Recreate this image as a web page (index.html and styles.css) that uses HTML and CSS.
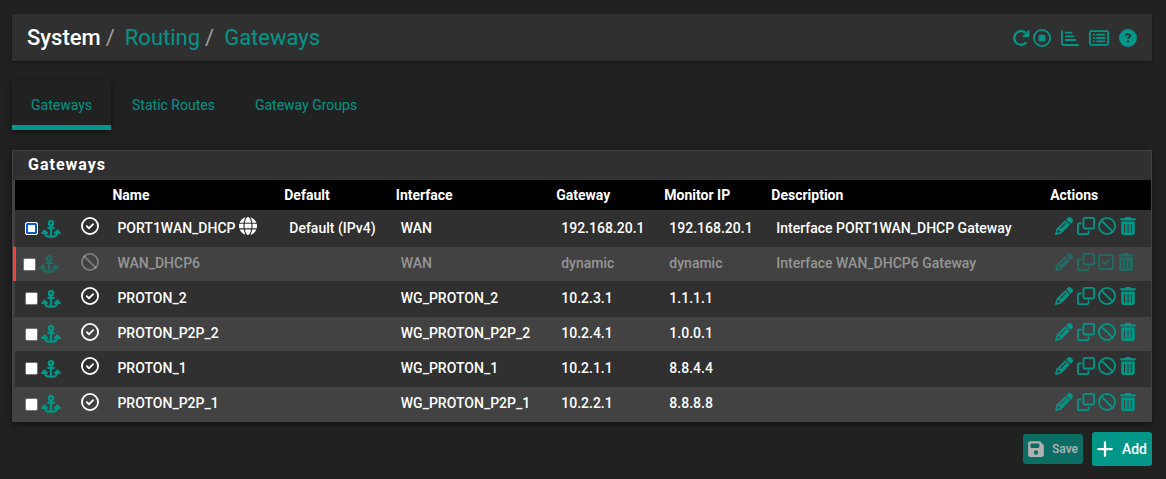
FILE: index.html
```
<!DOCTYPE html>
<html lang="en">
<head>
    <meta charset="UTF-8">
    <meta name="viewport" content="width=device-width, initial-scale=1.0">
    <title>System: Routing: Gateways</title>
    <link rel="stylesheet" href="styles.css">
</head>
<body>
<!-- icon set -->
<svg class="sprite" aria-hidden="true">
    <symbol id="i-reload" viewBox="0 0 512 512"><path d="M386.3 160H336c-17.7 0-32 14.3-32 32s14.3 32 32 32H464c17.7 0 32-14.3 32-32V64c0-17.7-14.3-32-32-32s-32 14.3-32 32v51.2L414.4 97.6c-87.5-87.5-229.3-87.5-316.8 0s-87.5 229.3 0 316.8s229.3 87.5 316.8 0c12.5-12.5 12.5-32.8 0-45.3s-32.8-12.5-45.3 0c-62.5 62.5-163.8 62.5-226.3 0s-62.5-163.8 0-226.3s163.8-62.5 226.3 0L386.3 160z"/></symbol>
    <symbol id="i-stop" viewBox="0 0 512 512"><circle class="line" cx="256" cy="256" r="230"/><rect x="160" y="160" width="192" height="192" rx="32"/></symbol>
    <symbol id="i-chart" viewBox="0 0 512 512"><path class="line" d="M26 56v344c0 31 25 56 56 56h404M136 104h160M136 208h224M136 312h272"/></symbol>
    <symbol id="i-list" viewBox="0 0 576 512"><rect class="line" x="26" y="56" width="524" height="400" rx="40"/><path class="line" d="M232 160h216M232 256h216M232 352h216"/><circle cx="144" cy="160" r="32"/><circle cx="144" cy="256" r="32"/><circle cx="144" cy="352" r="32"/></symbol>
    <symbol id="i-help" viewBox="0 0 512 512"><path d="M256 512A256 256 0 1 0 256 0a256 256 0 1 0 0 512zM169.8 165.3c7.9-22.3 29.1-37.3 52.8-37.3h58.3c34.9 0 63.1 28.3 63.1 63.1c0 22.6-12.1 43.5-31.7 54.8L280 264.4c-.2 13-10.9 23.6-24 23.6c-13.3 0-24-10.7-24-24V250.5c0-8.6 4.6-16.5 12.1-20.8l44.3-25.4c4.7-2.7 7.6-7.7 7.6-13.1c0-8.4-6.8-15.1-15.1-15.1H222.6c-3.4 0-6.4 2.1-7.5 5.3l-.4 1.2c-4.4 12.5-18.2 19-30.6 14.6s-19-18.2-14.6-30.6l.4-1.2zM224 352a32 32 0 1 1 64 0 32 32 0 1 1-64 0z"/></symbol>
    <symbol id="i-anchor" viewBox="0 0 576 512"><circle class="line bold" cx="288" cy="92" r="62"/><path class="line bold" d="M288 160v318M208 224h160M104 340v12c0 70 58 126 128 126h112c70 0 128-56 128-126v-12"/><path d="M104 268c8 0 14 3 19 8l76 80c16 18 4 44-19 44H28c-23 0-35-26-19-44l76-80c5-5 11-8 19-8zM472 268c8 0 14 3 19 8l76 80c16 18 4 44-19 44H396c-23 0-35-26-19-44l76-80c5-5 11-8 19-8z"/></symbol>
    <symbol id="i-ok" viewBox="0 0 512 512"><circle class="line" cx="256" cy="256" r="230"/><path class="line" d="M166 262l60 58 120-116"/></symbol>
    <symbol id="i-ban" viewBox="0 0 512 512"><circle class="line" cx="256" cy="256" r="230"/><path class="line" d="M94 94l324 324"/></symbol>
    <symbol id="i-globe" viewBox="0 0 512 512"><path d="M352 256c0 22.2-1.2 43.6-3.3 64H163.3c-2.2-20.4-3.3-41.8-3.3-64s1.2-43.6 3.3-64H348.7c2.2 20.4 3.3 41.8 3.3 64zm28.8-64H503.9c5.3 20.5 8.1 41.9 8.1 64s-2.8 43.5-8.1 64H380.8c2.1-20.6 3.2-42 3.2-64s-1.1-43.4-3.2-64zm112.6-32H376.7c-10-63.9-29.8-117.4-55.3-151.6c78.3 20.7 142 77.5 171.9 151.6zm-149.1 0H167.7c6.1-36.4 15.5-68.6 27-94.7c10.5-23.6 22.2-40.7 33.5-51.5C239.4 3.2 248.7 0 256 0s16.6 3.2 27.8 13.8c11.3 10.8 23 27.9 33.5 51.5c11.6 26 20.9 58.2 27 94.7zm-209 0H18.6C48.6 85.9 112.2 29.1 190.6 8.4C165.1 42.6 145.3 96.1 135.3 160zM8.1 192H131.2c-2.1 20.6-3.2 42-3.2 64s1.1 43.4 3.2 64H8.1C2.8 299.5 0 278.1 0 256s2.8-43.5 8.1-64zM194.7 446.6c-11.6-26-20.9-58.2-27-94.6H344.3c-6.1 36.4-15.5 68.6-27 94.6c-10.5 23.6-22.2 40.7-33.5 51.5C272.6 508.8 263.3 512 256 512s-16.6-3.2-27.8-13.8c-11.3-10.8-23-27.9-33.5-51.5zM135.3 352c10 63.9 29.8 117.4 55.3 151.6C112.2 482.9 48.6 426.1 18.6 352H135.3zm358.1 0c-30 74.1-93.6 130.9-171.9 151.6c25.5-34.2 45.2-87.7 55.3-151.6H493.4z"/></symbol>
    <symbol id="i-edit" viewBox="0 0 512 512"><path d="M410.3 231l11.3-11.3-33.9-33.9-62.1-62.1L291.7 89.8l-11.3 11.3-22.6 22.6L58.6 322.9c-10.4 10.4-18 23.3-22.2 37.4L1 480.7c-2.5 8.4-.2 17.5 6.1 23.7s15.3 8.5 23.7 6.1l120.3-35.4c14.1-4.2 27-11.8 37.4-22.2L387.7 253.7 410.3 231zM160 399.4l-9.1 22.7c-4 3.1-8.5 5.4-13.3 6.9L59.4 452l23-78.1c1.4-4.9 3.8-9.4 6.9-13.3l22.7-9.1v32c0 8.8 7.2 16 16 16h32zM362.7 18.7L348.3 33.2 325.7 55.8 314.3 67.1l33.9 33.9 62.1 62.1 33.9 33.9 11.3-11.3 22.6-22.6 14.5-14.5c25-25 25-65.5 0-90.5L453.3 18.7c-25-25-65.5-25-90.5 0zm-47.4 168l-144 144c-6.2 6.2-16.4 6.2-22.6 0s-6.2-16.4 0-22.6l144-144c6.2-6.2 16.4-6.2 22.6 0s6.2 16.4 0 22.6z"/></symbol>
    <symbol id="i-copy" viewBox="0 0 512 512"><rect class="line" x="184" y="26" width="302" height="302" rx="40"/><path class="line" d="M112 184H66c-22 0-40 18-40 40v222c0 22 18 40 40 40h222c22 0 40-18 40-40v-46"/></symbol>
    <symbol id="i-trash" viewBox="0 0 448 512"><path d="M135.2 17.7C140.6 6.8 151.7 0 163.8 0H284.2c12.1 0 23.2 6.8 28.6 17.7L320 32h96c17.7 0 32 14.3 32 32s-14.3 32-32 32H32C14.3 96 0 81.7 0 64S14.3 32 32 32h96l7.2-14.3zM32 128H416V448c0 35.3-28.7 64-64 64H96c-35.3 0-64-28.7-64-64V128zm96 64c-8.8 0-16 7.2-16 16V432c0 8.8 7.2 16 16 16s16-7.2 16-16V208c0-8.8-7.2-16-16-16zm96 0c-8.8 0-16 7.2-16 16V432c0 8.8 7.2 16 16 16s16-7.2 16-16V208c0-8.8-7.2-16-16-16zm96 0c-8.8 0-16 7.2-16 16V432c0 8.8 7.2 16 16 16s16-7.2 16-16V208c0-8.8-7.2-16-16-16z"/></symbol>
    <symbol id="i-enable" viewBox="0 0 448 512"><rect class="line" x="26" y="58" width="396" height="396" rx="40"/><path class="line" d="M136 256l60 60 116-116"/></symbol>
    <symbol id="i-save" viewBox="0 0 448 512"><path d="M64 32C28.7 32 0 60.7 0 96V416c0 35.3 28.7 64 64 64H384c35.3 0 64-28.7 64-64V173.3c0-17-6.7-33.3-18.7-45.3L352 50.7C340 38.7 323.7 32 306.7 32H64zm0 96c0-17.7 14.3-32 32-32H288c17.7 0 32 14.3 32 32v64c0 17.7-14.3 32-32 32H96c-17.7 0-32-14.3-32-32V128zM224 288a64 64 0 1 1 0 128 64 64 0 1 1 0-128z"/></symbol>
    <symbol id="i-plus" viewBox="0 0 448 512"><path class="line bold" d="M224 64v384M32 256h384"/></symbol>
</svg>

<header class="page-header">
    <ol class="breadcrumb">
        <li>System</li>
        <li><a href="#">Routing</a></li>
        <li><a href="#">Gateways</a></li>
    </ol>
    <nav class="shortcuts" aria-label="Shortcuts">
        <span class="service">
            <a href="#" aria-label="Restart service"><svg class="icon"><use href="#i-reload"/></svg></a>
            <a href="#" aria-label="Stop service"><svg class="icon"><use href="#i-stop"/></svg></a>
        </span>
        <a href="#" aria-label="Status"><svg class="icon"><use href="#i-chart"/></svg></a>
        <a href="#" aria-label="Logs"><svg class="icon wide"><use href="#i-list"/></svg></a>
        <a href="#" aria-label="Help"><svg class="icon"><use href="#i-help"/></svg></a>
    </nav>
</header>

<nav class="tabs" aria-label="Routing">
    <a href="#" class="active">Gateways</a>
    <a href="#">Static Routes</a>
    <a href="#">Gateway Groups</a>
</nav>

<form>
    <section class="panel">
        <h2>Gateways</h2>
        <table>
            <colgroup>
                <col class="c-select"><col class="c-status"><col class="c-name"><col class="c-default"><col class="c-interface"><col class="c-gateway"><col class="c-monitor"><col class="c-descr"><col class="c-actions">
            </colgroup>
            <thead>
            <tr>
                <th></th>
                <th></th>
                <th>Name</th>
                <th>Default</th>
                <th>Interface</th>
                <th>Gateway</th>
                <th>Monitor IP</th>
                <th>Description</th>
                <th>Actions</th>
            </tr>
            </thead>
            <tbody>
            <tr>
                <td><div class="select"><input type="checkbox" class="focused" aria-label="Select PORT1WAN_DHCP"><a href="#" aria-label="Move"><svg class="icon wide"><use href="#i-anchor"/></svg></a></div></td>
                <td><svg class="icon"><use href="#i-ok"/></svg></td>
                <td>PORT1WAN_DHCP <svg class="icon"><use href="#i-globe"/></svg></td>
                <td>Default (IPv4)</td>
                <td>WAN</td>
                <td>192.168.20.1</td>
                <td>192.168.20.1</td>
                <td>Interface PORT1WAN_DHCP Gateway</td>
                <td>
                    <a href="#" aria-label="Edit"><svg class="icon"><use href="#i-edit"/></svg></a>
                    <a href="#" aria-label="Copy"><svg class="icon"><use href="#i-copy"/></svg></a>
                    <a href="#" aria-label="Disable"><svg class="icon"><use href="#i-ban"/></svg></a>
                    <a href="#" aria-label="Delete"><svg class="icon narrow"><use href="#i-trash"/></svg></a>
                </td>
            </tr>
            <tr class="disabled">
                <td><div class="select"><input type="checkbox" aria-label="Select WAN_DHCP6"><a href="#" aria-label="Move"><svg class="icon wide"><use href="#i-anchor"/></svg></a></div></td>
                <td><svg class="icon"><use href="#i-ban"/></svg></td>
                <td>WAN_DHCP6</td>
                <td></td>
                <td>WAN</td>
                <td>dynamic</td>
                <td>dynamic</td>
                <td>Interface WAN_DHCP6 Gateway</td>
                <td>
                    <a href="#" aria-label="Edit"><svg class="icon"><use href="#i-edit"/></svg></a>
                    <a href="#" aria-label="Copy"><svg class="icon"><use href="#i-copy"/></svg></a>
                    <a href="#" aria-label="Enable"><svg class="icon narrow"><use href="#i-enable"/></svg></a>
                    <a href="#" aria-label="Delete"><svg class="icon narrow"><use href="#i-trash"/></svg></a>
                </td>
            </tr>
            <tr>
                <td><div class="select"><input type="checkbox" aria-label="Select PROTON_2"><a href="#" aria-label="Move"><svg class="icon wide"><use href="#i-anchor"/></svg></a></div></td>
                <td><svg class="icon"><use href="#i-ok"/></svg></td>
                <td>PROTON_2</td>
                <td></td>
                <td>WG_PROTON_2</td>
                <td>10.2.3.1</td>
                <td>1.1.1.1</td>
                <td></td>
                <td>
                    <a href="#" aria-label="Edit"><svg class="icon"><use href="#i-edit"/></svg></a>
                    <a href="#" aria-label="Copy"><svg class="icon"><use href="#i-copy"/></svg></a>
                    <a href="#" aria-label="Disable"><svg class="icon"><use href="#i-ban"/></svg></a>
                    <a href="#" aria-label="Delete"><svg class="icon narrow"><use href="#i-trash"/></svg></a>
                </td>
            </tr>
            <tr>
                <td><div class="select"><input type="checkbox" aria-label="Select PROTON_P2P_2"><a href="#" aria-label="Move"><svg class="icon wide"><use href="#i-anchor"/></svg></a></div></td>
                <td><svg class="icon"><use href="#i-ok"/></svg></td>
                <td>PROTON_P2P_2</td>
                <td></td>
                <td>WG_PROTON_P2P_2</td>
                <td>10.2.4.1</td>
                <td>1.0.0.1</td>
                <td></td>
                <td>
                    <a href="#" aria-label="Edit"><svg class="icon"><use href="#i-edit"/></svg></a>
                    <a href="#" aria-label="Copy"><svg class="icon"><use href="#i-copy"/></svg></a>
                    <a href="#" aria-label="Disable"><svg class="icon"><use href="#i-ban"/></svg></a>
                    <a href="#" aria-label="Delete"><svg class="icon narrow"><use href="#i-trash"/></svg></a>
                </td>
            </tr>
            <tr>
                <td><div class="select"><input type="checkbox" aria-label="Select PROTON_1"><a href="#" aria-label="Move"><svg class="icon wide"><use href="#i-anchor"/></svg></a></div></td>
                <td><svg class="icon"><use href="#i-ok"/></svg></td>
                <td>PROTON_1</td>
                <td></td>
                <td>WG_PROTON_1</td>
                <td>10.2.1.1</td>
                <td>8.8.4.4</td>
                <td></td>
                <td>
                    <a href="#" aria-label="Edit"><svg class="icon"><use href="#i-edit"/></svg></a>
                    <a href="#" aria-label="Copy"><svg class="icon"><use href="#i-copy"/></svg></a>
                    <a href="#" aria-label="Disable"><svg class="icon"><use href="#i-ban"/></svg></a>
                    <a href="#" aria-label="Delete"><svg class="icon narrow"><use href="#i-trash"/></svg></a>
                </td>
            </tr>
            <tr>
                <td><div class="select"><input type="checkbox" aria-label="Select PROTON_P2P_1"><a href="#" aria-label="Move"><svg class="icon wide"><use href="#i-anchor"/></svg></a></div></td>
                <td><svg class="icon"><use href="#i-ok"/></svg></td>
                <td>PROTON_P2P_1</td>
                <td></td>
                <td>WG_PROTON_P2P_1</td>
                <td>10.2.2.1</td>
                <td>8.8.8.8</td>
                <td></td>
                <td>
                    <a href="#" aria-label="Edit"><svg class="icon"><use href="#i-edit"/></svg></a>
                    <a href="#" aria-label="Copy"><svg class="icon"><use href="#i-copy"/></svg></a>
                    <a href="#" aria-label="Disable"><svg class="icon"><use href="#i-ban"/></svg></a>
                    <a href="#" aria-label="Delete"><svg class="icon narrow"><use href="#i-trash"/></svg></a>
                </td>
            </tr>
            </tbody>
        </table>
    </section>

    <div class="buttons">
        <button type="submit" class="btn btn-save" disabled><svg class="icon narrow"><use href="#i-save"/></svg>Save</button>
        <button type="button" class="btn"><svg class="icon narrow"><use href="#i-plus"/></svg>Add</button>
    </div>
</form>
</body>
</html>
```
FILE: styles.css
```
* {
    box-sizing: border-box;
}

body {
    margin: 0;
    padding: 14px 14px 12px 12px;
    background: #212121;
    color: #fff;
    font-family: Roboto, "Liberation Sans", sans-serif;
    font-size: 14px;
    font-weight: 500;
    line-height: 20px;
}

a {
    color: #009688;
    text-decoration: none;
}

/* icons */
.sprite {
    display: none;
}

.icon {
    width: 18px;
    height: 18px;
    fill: currentColor;
    vertical-align: -2px;
}

.icon.wide {
    width: 20px;
}

.icon.narrow {
    width: 16px;
}

.line {
    fill: none;
    stroke: currentColor;
    stroke-width: 52;
    stroke-linecap: round;
    stroke-linejoin: round;
}

.line.bold {
    stroke-width: 64;
}

/* page header */
.page-header {
    display: flex;
    align-items: center;
    justify-content: space-between;
    padding: 8px 15px;
    background: #303030;
    box-shadow: 0 1px 3px rgba(0, 0, 0, 0.4);
}

.breadcrumb {
    display: flex;
    margin: 0;
    padding: 0;
    list-style: none;
    font-size: 22px;
    font-weight: 400;
    line-height: 31px;
}

.breadcrumb li:first-child {
    font-weight: 500;
}

.breadcrumb li + li::before {
    content: "/";
    padding: 0 10px 0 5px;
    color: #9e9e9e;
}

.shortcuts {
    display: flex;
    align-items: center;
    gap: 10px;
}

.service {
    display: flex;
    gap: 3px;
}

.shortcuts .icon {
    display: block;
}

/* tabs */
.tabs {
    display: flex;
    gap: 2px;
    margin: 20px 0;
    font-weight: 400;
}

.tabs a {
    padding: 14px 19px 10px;
    border-bottom: 5px solid transparent;
}

.tabs .active {
    border-color: #009688;
    box-shadow: 0 2px 6px rgba(0, 0, 0, 0.5);
}

/* gateways panel */
.panel {
    background: #303030;
    border: 1px solid #424242;
    box-shadow: 0 2px 6px rgba(0, 0, 0, 0.5);
}

.panel h2 {
    margin: 0;
    padding: 4px 15px 5px;
    font-size: 16px;
    font-weight: 700;
    letter-spacing: 1px;
}

table {
    width: 100%;
    table-layout: fixed;
    border-spacing: 0;
}

.c-select { width: 5.1%; }
.c-status { width: 3.2%; }
.c-name { width: 15.1%; }
.c-default { width: 9.8%; }
.c-interface { width: 14.1%; }
.c-gateway { width: 9.5%; }
.c-monitor { width: 9.4%; }
.c-actions { width: 9.3%; }

th {
    padding: 5px;
    background: #000;
    border-bottom: 1px solid #303030;
    font-weight: 700;
    text-align: left;
}

td {
    height: 35px;
    padding: 0 0 2px 10px;
    white-space: nowrap;
}

td:first-child {
    padding-bottom: 0;
}

th:first-child,
td:first-child {
    border-left: 2px solid #424242;
}

tbody tr:nth-child(even) td {
    background: #424242;
    border-top: 1px solid #303030;
}

.select {
    display: flex;
    align-items: center;
    gap: 3px;
}

.select .icon {
    display: block;
}

input[type="checkbox"] {
    appearance: none;
    width: 13px;
    height: 13px;
    margin: 0;
    background: #fff;
    border: 1px solid #767676;
    border-radius: 2px;
}

input[type="checkbox"].focused {
    border-color: #fff;
    box-shadow: inset 0 0 0 2px #0b5cca;
}

.disabled {
    color: rgba(255, 255, 255, 0.45);
}

.disabled td:nth-child(2) {
    color: rgba(255, 255, 255, 0.3);
}

.disabled a {
    opacity: 0.5;
}

tbody .disabled td:first-child {
    padding-left: 7px;
    border-left: 3px solid #f44336;
}

/* buttons */
.buttons {
    display: flex;
    justify-content: flex-end;
    align-items: center;
    gap: 9px;
    margin-top: 10px;
}

.btn {
    display: flex;
    align-items: center;
    gap: 9px;
    padding: 7px 5px;
    background: #009688;
    border: 0;
    border-radius: 3px;
    color: #fff;
    font: inherit;
}

.btn-save {
    gap: 8px;
    padding: 5px;
    font-size: 12px;
    opacity: 0.65;
}
```
